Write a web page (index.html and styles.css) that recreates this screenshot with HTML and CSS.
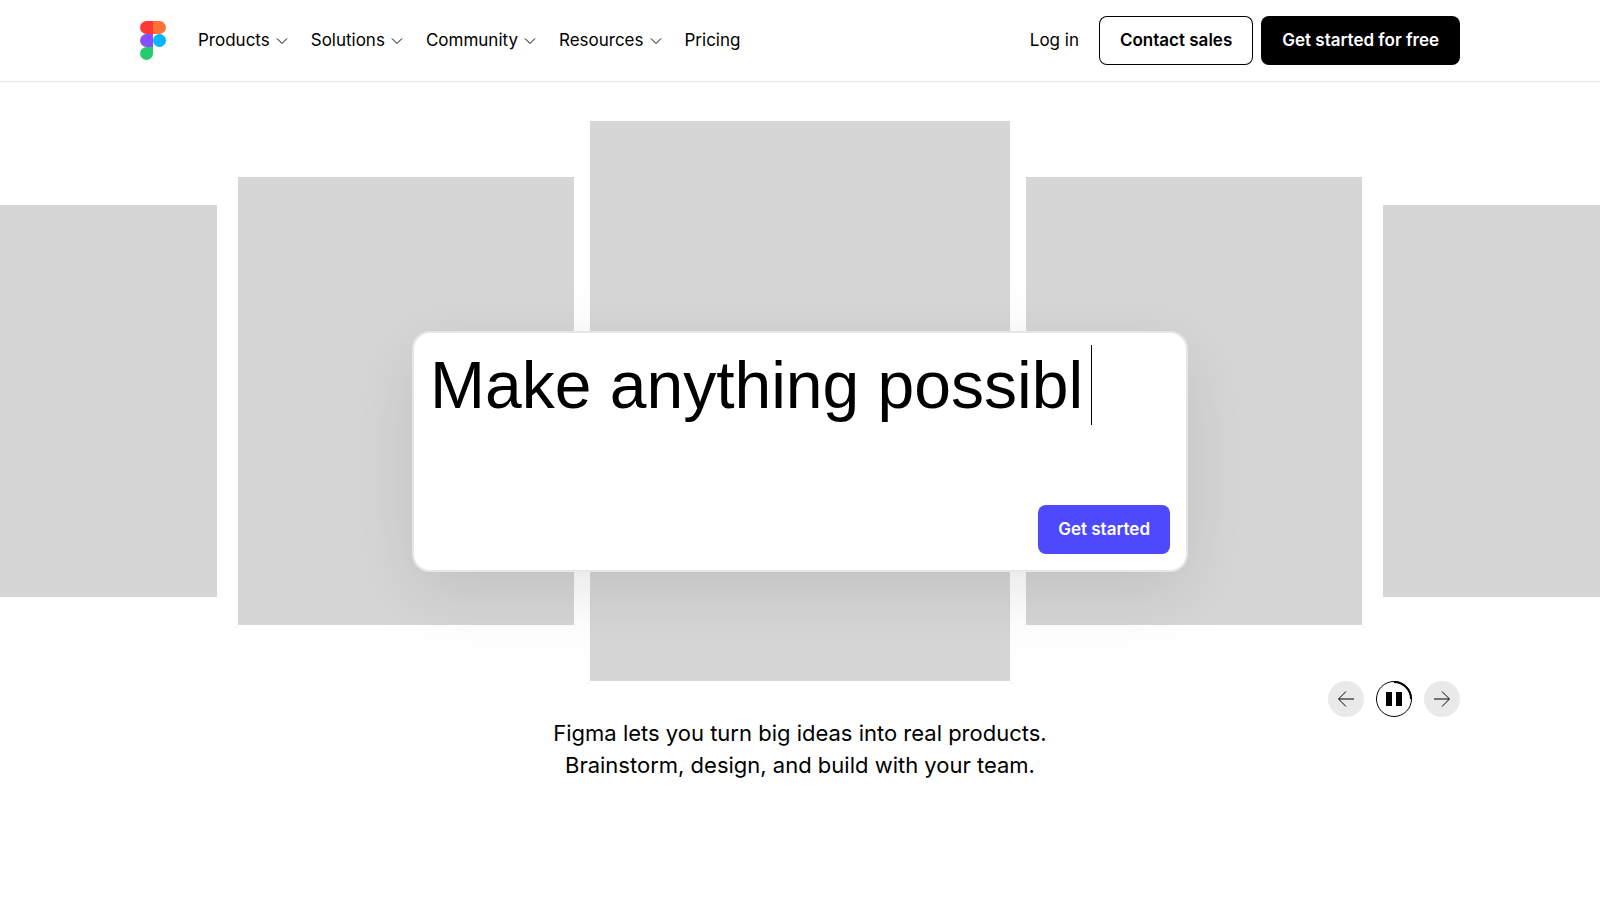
FILE: index.html
```html
<!DOCTYPE html>
<html lang="en">

<head>
  <meta charset="utf-8">
  <meta name="viewport" content="width=device-width, initial-scale=1">
  <title>Figma</title>
  <link rel="stylesheet" href="styles.css">
</head>

<body>
  <header class="header">
    <div class="header-inner">
      <a href="#" class="logo" aria-label="Figma">
        <svg width="26" height="39" viewBox="0 0 26 39">
          <path fill="#ff3737" d="M6.5 0H13v13H6.5a6.5 6.5 0 0 1 0-13z" />
          <path fill="#ff7237" d="M13 0h6.500a6.500 6.500 0 0 1 0 13H13z" />
          <path fill="#874fff" d="M6.500 13H13v13H6.500a6.500 6.500 0 0 1 0-13z" />
          <circle fill="#00b6ff" cx="19.500" cy="19.500" r="6.500" />
          <path fill="#24cb71" d="M6.500 26H13v6.500A6.500 6.500 0 1 1 6.500 26z" />
        </svg>
      </a>
      <nav class="nav">
        <button class="nav-item">Products
          <svg class="chevron" width="12" height="8" viewBox="0 0 12 8"><path d="M1 1.500l5 5 5-5" /></svg>
        </button>
        <button class="nav-item">Solutions
          <svg class="chevron" width="12" height="8" viewBox="0 0 12 8"><path d="M1 1.500l5 5 5-5" /></svg>
        </button>
        <button class="nav-item">Community
          <svg class="chevron" width="12" height="8" viewBox="0 0 12 8"><path d="M1 1.500l5 5 5-5" /></svg>
        </button>
        <button class="nav-item">Resources
          <svg class="chevron" width="12" height="8" viewBox="0 0 12 8"><path d="M1 1.500l5 5 5-5" /></svg>
        </button>
        <a href="#" class="nav-item">Pricing</a>
      </nav>
      <div class="account">
        <a href="#" class="login">Log in</a>
        <button class="btn btn-outline">Contact sales</button>
        <button class="btn btn-dark">Get started for free</button>
      </div>
    </div>
  </header>

  <main>
    <section class="hero">
      <div class="carousel">
        <div class="tile tile-outer"></div>
        <div class="tile tile-side"></div>
        <div class="tile tile-center"></div>
        <div class="tile tile-side"></div>
        <div class="tile tile-outer"></div>
      </div>
      <div class="prompt">
        <h1 class="prompt-text">Make anything possibl<span class="caret"></span></h1>
        <button class="btn btn-primary">Get started</button>
      </div>
    </section>

    <div class="controls">
      <button class="control" aria-label="Previous">
        <svg width="36" height="36" viewBox="0 0 36 36"><path d="M26 18H11M18 10.500L10.500 18l7.500 7.500" /></svg>
      </button>
      <button class="control control-pause" aria-label="Pause">
        <svg width="36" height="36" viewBox="0 0 36 36">
          <circle cx="18" cy="18" r="17.500" />
          <path class="progress" d="M18 1a17 17 0 0 1 17 17" />
          <path class="bars" d="M10 11h6v14h-6zM20 11h6v14h-6z" />
        </svg>
      </button>
      <button class="control" aria-label="Next">
        <svg width="36" height="36" viewBox="0 0 36 36"><path d="M10 18h15M18 10.500l7.500 7.500-7.500 7.500" /></svg>
      </button>
    </div>

    <p class="tagline">Figma lets you turn big ideas into real products.<br>Brainstorm, design, and build with your team.</p>
  </main>
</body>

</html>
```
FILE: styles.css
```css
* {
  box-sizing: border-box;
}

body {
  margin: 0;
  background: #ffffff;
  color: #000000;
  font-family: Inter, "Liberation Sans", sans-serif;
  font-size: 17px;
  line-height: 25px;
}

a {
  color: inherit;
  text-decoration: none;
}

button {
  padding: 0;
  border: none;
  background: none;
  color: inherit;
  font: inherit;
  cursor: pointer;
}

.header {
  padding: 16px 140px;
  border-bottom: 1px solid #e6e6e6;
}

.header-inner {
  display: flex;
  align-items: center;
}

.logo {
  display: flex;
  margin-right: 32px;
}

.nav {
  display: flex;
  gap: 23px;
}

.nav-item {
  display: flex;
  align-items: center;
  gap: 6px;
  white-space: nowrap;
}

.chevron {
  fill: none;
  stroke: #000000;
}

.account {
  display: flex;
  align-items: center;
  gap: 8px;
  margin-left: auto;
  white-space: nowrap;
}

.login {
  margin-right: 12px;
}

.btn {
  padding: 12px 21px;
  border-radius: 8px;
  font-weight: 600;
}

.btn-outline {
  box-shadow: inset 0 0 0 1px #000000;
}

.btn-dark {
  background: #000000;
  color: #ffffff;
}

.btn-primary {
  padding: 12px 20px;
  background: #4d49fc;
  color: #ffffff;
}

.hero {
  position: relative;
  padding-top: 39px;
  overflow-x: clip;
}

.carousel {
  display: flex;
  justify-content: center;
  align-items: center;
  gap: 16px;
}

.tile {
  flex: none;
  background: #d6d6d6;
}

.tile-center {
  width: 420px;
  height: 560px;
}

.tile-side {
  width: 336px;
  height: 448px;
}

.tile-outer {
  width: 294px;
  height: 392px;
  margin: 0 5px;
}

.prompt {
  position: absolute;
  top: 249px;
  left: 50%;
  transform: translateX(-50%);
  display: flex;
  flex-direction: column;
  justify-content: space-between;
  width: 776px;
  height: 241px;
  padding: 12px 16px 16px;
  border: 2px solid #e6e6e6;
  border-radius: 18px;
  background: #ffffff;
  box-shadow: 0 20px 70px rgba(0, 0, 0, 0.1);
}

.prompt-text {
  display: flex;
  margin: 0;
  font-family: "Liberation Sans", Arial, sans-serif;
  font-size: 66px;
  font-weight: 400;
  line-height: 80px;
  white-space: nowrap;
}

.caret {
  width: 1px;
  margin-left: 8px;
  background: #000000;
}

.prompt .btn {
  align-self: flex-end;
}

.controls {
  display: flex;
  justify-content: flex-end;
  gap: 12px;
  padding: 0 140px;
}

.control {
  width: 36px;
  height: 36px;
  border-radius: 50%;
  background: #e9e9e9;
}

.control svg {
  display: block;
  fill: none;
  stroke: #000000;
}

.control-pause {
  background: #ffffff;
}

.control-pause .progress {
  stroke-width: 2;
}

.control-pause .bars {
  fill: #000000;
  stroke: none;
}

.tagline {
  margin: 0;
  font-size: 22px;
  line-height: 32px;
  text-align: center;
}
```
